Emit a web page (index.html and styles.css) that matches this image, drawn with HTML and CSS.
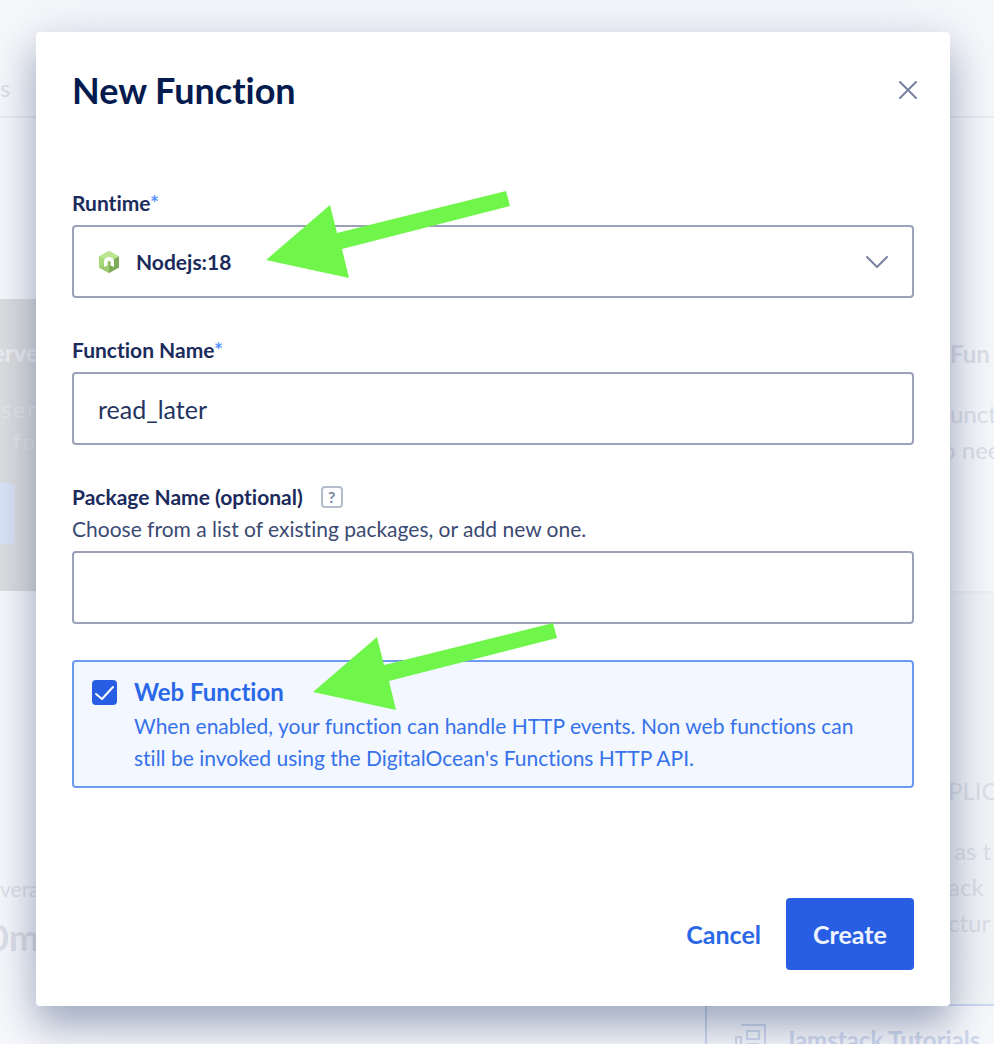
FILE: index.html
```html
<!DOCTYPE html>
<html lang="en">
<head>
    <meta charset="UTF-8">
    <meta name="viewport" content="width=device-width, initial-scale=1.0">
    <title>New Function</title>
    <link rel="stylesheet" href="styles.css">
</head>
<body>
    <!-- Faded page behind the dialog -->
    <div class="page" aria-hidden="true">
        <div class="page-nav">s</div>
        <div class="page-columns">
            <div class="page-left">
                <div class="promo">
                    <p class="promo-title">erve</p>
                    <p class="promo-code">ser</p>
                    <p class="promo-code promo-indent">fo</p>
                    <div class="promo-button"></div>
                </div>
                <p class="stat-label">vera</p>
                <p class="stat-value">0m</p>
            </div>
            <div class="page-right">
                <div class="side-card">
                    <p class="side-title">Fun</p>
                    <p>unct</p>
                    <p class="side-shift">o nee</p>
                </div>
                <div class="side-text">
                    <p class="side-caps">PLIC</p>
                    <p>&nbsp;as t</p>
                    <p>ack</p>
                    <p>ctur</p>
                </div>
                <div class="tutorials">
                    <svg width="32" height="32" viewBox="0 0 32 32" fill="none" stroke="currentColor" stroke-width="2">
                        <path d="M6 1h24v26a4 4 0 0 1-4 4H5a4 4 0 0 1-4-4V13h5v14"/>
                        <path d="M12 7h12v8H12zM12 20h12M12 25h12"/>
                    </svg>
                    <span>Jamstack Tutorials</span>
                </div>
            </div>
        </div>
    </div>

    <div class="overlay">
        <form class="modal" role="dialog" aria-labelledby="modal-title">
            <div class="modal-header">
                <h1 id="modal-title">New Function</h1>
                <button type="button" class="close" aria-label="Close">
                    <svg width="20" height="20" viewBox="0 0 20 20" fill="none" stroke="currentColor" stroke-width="2" stroke-linecap="round">
                        <path d="M2 2l16 16M18 2L2 18"/>
                    </svg>
                </button>
            </div>

            <div class="field">
                <label for="runtime">Runtime<span class="required">*</span></label>
                <div class="select">
                    <svg class="node-icon" width="20" height="22" viewBox="0 0 20 22">
                        <path fill="#a5d878" d="M10 0l10 5.5v11L10 22 0 16.500v-11z"/>
                        <path fill="#b9e58e" d="M10 0l10 5.500L10 11 0 5.500z"/>
                        <path fill="#7fac59" d="M20 5.500v11L10 22V11z"/>
                        <path fill="#9bcb6e" d="M0 16.500L10 11v11z"/>
                        <path fill="#fff" d="M5 16V10.500a5 4.500 0 0 1 10 0V16l-3.500-1.500V11a1.500 1.500 0 0 0-3 0v3.500z"/>
                    </svg>
                    <select id="runtime">
                        <option>Nodejs:18</option>
                    </select>
                    <svg class="chevron" width="22" height="14" viewBox="0 0 22 14" fill="none" stroke="currentColor" stroke-width="2" stroke-linecap="round" stroke-linejoin="round">
                        <path d="M1 2l10 10L21 2"/>
                    </svg>
                </div>
                <svg class="arrow arrow-runtime" width="244" height="88" viewBox="0 0 244 88">
                    <path d="M0 69L64 14l7 28L240 0l4 15L76 58l7 29z"/>
                </svg>
            </div>

            <div class="field">
                <label for="name">Function Name<span class="required">*</span></label>
                <input type="text" id="name" value="read_later">
            </div>

            <div class="field">
                <div class="label-row">
                    <label for="package">Package Name (optional)</label>
                    <button type="button" class="help" aria-label="Help">?</button>
                </div>
                <p class="hint" id="package-hint">Choose from a list of existing packages, or add new one.</p>
                <input type="text" id="package" aria-describedby="package-hint">
            </div>

            <div class="web-function">
                <div class="checkbox">
                    <input type="checkbox" id="web" aria-describedby="web-hint" checked>
                    <svg width="25" height="25" viewBox="0 0 25 25" fill="none" stroke="#fff" stroke-width="2" stroke-linecap="round" stroke-linejoin="round">
                        <path d="M4 14l6 5L21 7"/>
                    </svg>
                </div>
                <div class="web-text">
                    <label for="web">Web Function</label>
                    <p id="web-hint">When enabled, your function can handle HTTP events. Non web functions can still be invoked using the DigitalOcean's Functions HTTP API.</p>
                </div>
                <svg class="arrow arrow-web" width="244" height="88" viewBox="0 0 244 88">
                    <path d="M0 69L64 14l7 28L240 0l4 15L76 58l7 29z"/>
                </svg>
            </div>

            <div class="modal-footer">
                <button type="button" class="cancel">Cancel</button>
                <button type="submit" class="create">Create</button>
            </div>
        </form>
    </div>
</body>
</html>
```

FILE: styles.css
```css
* {
    margin: 0;
    padding: 0;
    box-sizing: border-box;
}

body {
    position: relative;
    min-height: 100vh;
    overflow: hidden;
    background: #f5f7fb;
    font-family: Lato, "Open Sans", sans-serif;
    font-size: 21px;
    font-variant-ligatures: none;
    line-height: 32px;
    color: #24345f;
}

button,
input,
select {
    font: inherit;
    color: inherit;
}

button {
    border: 0;
    background: none;
    cursor: pointer;
}

/* Background page */
.page {
    position: absolute;
    inset: 0;
    overflow: hidden;
    color: #dcdfe8;
    white-space: nowrap;
    font-size: 24px;
    line-height: 36px;
}

.page-nav {
    height: 118px;
    padding-top: 70px;
    border-bottom: 2px solid #e9ebf3;
}

.page-columns {
    display: flex;
    justify-content: space-between;
}

.page-left {
    width: 36px;
    padding-top: 181px;
}

.promo {
    height: 292px;
    padding-top: 36px;
    background: #dcdddf;
    color: #eceef2;
}

.promo-title {
    margin: 0 0 24px -8px;
    font-weight: bold;
}

.promo-code {
    font-family: "DejaVu Sans Mono", monospace;
    font-size: 21px;
    line-height: 32px;
    color: #e4e6ea;
}

.promo-indent {
    padding-left: 10px;
}

.promo-button {
    width: 15px;
    height: 61px;
    margin-top: 24px;
    border-radius: 0 4px 4px 0;
    background: #d9e3f6;
}

.stat-label {
    margin-top: 280px;
    font-size: 21px;
}

.stat-value {
    margin: 12px 0 0 -12px;
    font-size: 36px;
    font-weight: bold;
}

.page-right {
    width: 289px;
}

.side-card {
    height: 475px;
    padding: 218px 0 0 245px;
    border-bottom: 2px solid #eceef4;
}

.side-title {
    margin-bottom: 24px;
    font-weight: bold;
}

.side-shift {
    margin-left: -8px;
}

.side-text {
    height: 411px;
    padding: 180px 0 0 243px;
    background: #f0f4f7;
}

.side-caps {
    margin-bottom: 24px;
}

.tutorials {
    display: flex;
    align-items: center;
    gap: 18px;
    height: 72px;
    padding-left: 28px;
    border: 2px solid #ccd8f1;
    border-right: 0;
    color: #cfd9ee;
    font-weight: bold;
}

/* Dialog */
.overlay {
    position: relative;
    padding: 32px 44px 36px 36px;
}

.modal {
    display: flex;
    flex-direction: column;
    gap: 36px;
    padding: 36px;
    border-radius: 4px;
    background: #fff;
    box-shadow: 0 20px 36px rgba(3, 27, 78, 0.3), 0 4px 60px rgba(3, 27, 78, 0.1);
}

.modal-header {
    display: flex;
    justify-content: space-between;
    align-items: center;
    height: 44px;
    margin-bottom: 39px;
}

.modal-header h1 {
    font-size: 36px;
    line-height: 44px;
    color: #031b4e;
}

.close {
    display: flex;
    padding: 6px;
    margin-right: -10px;
    color: #7983a1;
}

.field {
    position: relative;
    display: flex;
    flex-direction: column;
}

.field label {
    font-weight: bold;
    color: #1b2b5c;
}

.required {
    color: #5a95ff;
}

.field input,
.field select {
    width: 100%;
    height: 73px;
    margin-top: 6px;
    padding: 0 24px;
    border: 2px solid #9aa1b8;
    border-radius: 4px;
    background: #fff;
}

.field input {
    font-size: 25px;
}

.select {
    position: relative;
}

.field select {
    appearance: none;
    padding-left: 62px;
    font-weight: bold;
    color: #1b2b5c;
}

.node-icon,
.chevron {
    position: absolute;
    pointer-events: none;
}

.node-icon {
    left: 27px;
    top: 32px;
}

.chevron {
    right: 26px;
    top: 36px;
    color: #7983a1;
}

.label-row {
    display: flex;
    align-items: center;
    gap: 18px;
}

.help {
    width: 22px;
    height: 22px;
    border: 2px solid #b4bccd;
    border-radius: 4px;
    font-size: 16px;
    font-weight: bold;
    line-height: 18px;
    color: #7983a1;
}

.hint {
    color: #3b4a72;
}

.web-function {
    position: relative;
    display: flex;
    gap: 17px;
    padding: 14px 48px 12px 18px;
    border: 2px solid #6c9af0;
    border-radius: 4px;
    background: #f3f7ff;
    color: #3672ea;
}

.checkbox {
    display: grid;
    flex: none;
    align-self: flex-start;
    margin-top: 4px;
}

.checkbox input,
.checkbox svg {
    grid-area: 1 / 1;
}

.checkbox svg {
    pointer-events: none;
    visibility: hidden;
}

.checkbox input:checked + svg {
    visibility: visible;
}

.checkbox input {
    appearance: none;
    width: 25px;
    height: 25px;
    border: 2px solid #275ee4;
    border-radius: 4px;
}

.checkbox input:checked {
    background: #275ee4;
}

.web-text label {
    display: block;
    margin-bottom: 2px;
    font-size: 24px;
    font-weight: bold;
    color: #2a68e8;
}

.arrow {
    position: absolute;
    fill: #70f64a;
    pointer-events: none;
}

.arrow-runtime {
    left: 194px;
    top: 4px;
}

.arrow-web {
    left: 239px;
    top: -39px;
}

.modal-footer {
    display: flex;
    justify-content: flex-end;
    align-items: center;
    gap: 25px;
    margin-top: 74px;
    font-size: 25px;
    font-weight: bold;
}

.cancel {
    color: #2a68e8;
}

.create {
    width: 128px;
    height: 72px;
    border-radius: 4px;
    background: #275ee4;
    color: #eef3ff;
}
```
